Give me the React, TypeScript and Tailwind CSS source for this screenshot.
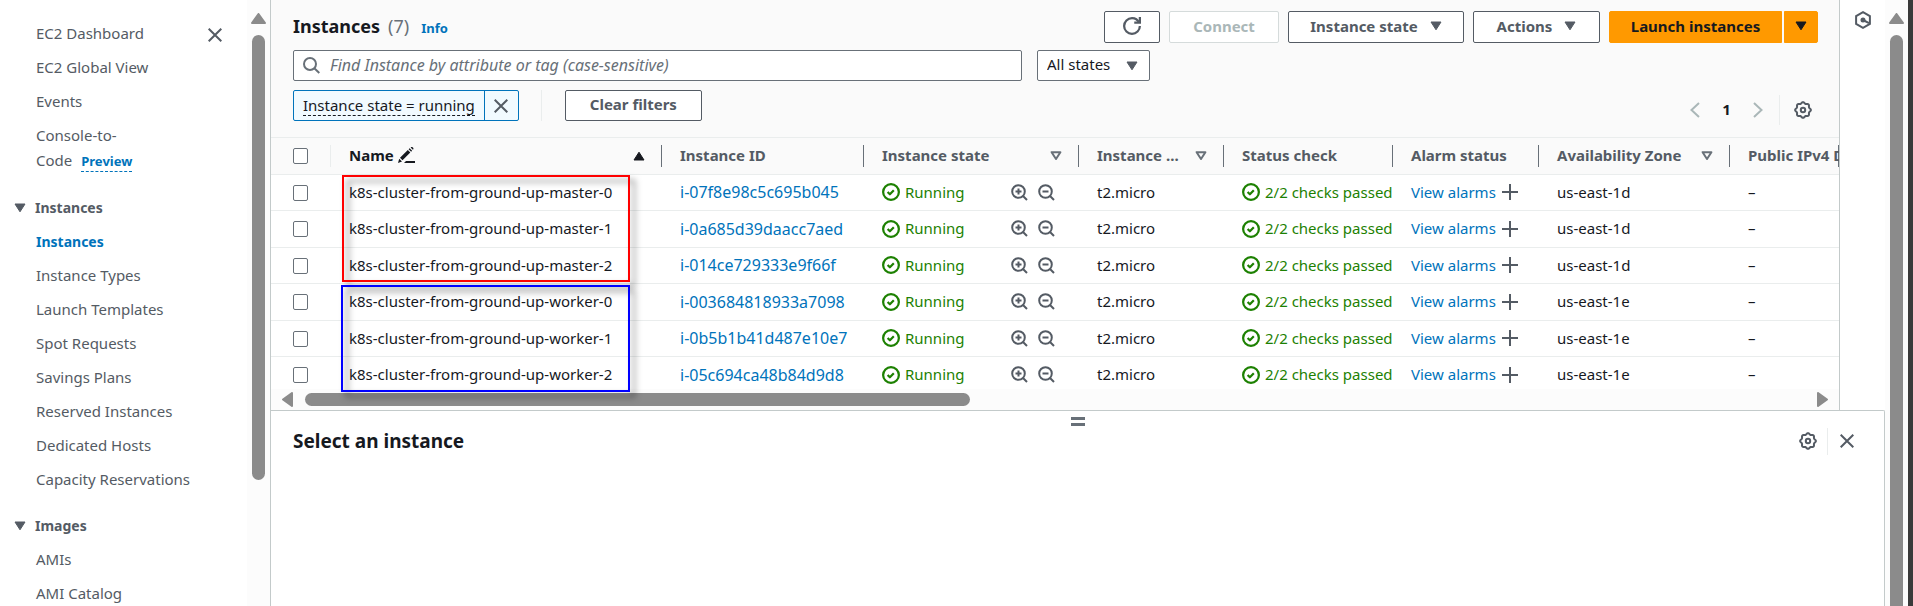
import React from 'react';

type IconProps = { className?: string };

const gearPath = (() => {
  const points: string[] = [];
  for (let i = 0; i < 96; i++) {
    const a = (i / 96) * Math.PI * 2;
    const r = 7.2 + 0.65 * Math.cos(8 * a);
    points.push(`${(9 + r * Math.cos(a)).toFixed(2)} ${(9 + r * Math.sin(a)).toFixed(2)}`);
  }
  return `M${points.join('L')}Z`;
})();

const GearIcon = () => (
  <svg width="18" height="18" viewBox="0 0 18 18" fill="none" stroke="#545b64" strokeWidth="2" aria-hidden="true">
    <path d={gearPath} />
    <circle cx="9" cy="9" r="2.2" />
  </svg>
);

const CloseIcon = () => (
  <svg width="14" height="14" viewBox="0 0 14 14" fill="none" stroke="#545b64" strokeWidth="2" aria-hidden="true">
    <path d="M.7.7l12.6 12.6M13.3.7L.7 13.3" />
  </svg>
);

const Caret = ({ className = '' }: IconProps) => (
  <svg width="12" height="10" viewBox="0 0 12 10" className={`shrink-0 ${className}`} fill="currentColor" stroke="currentColor" strokeLinejoin="round" aria-hidden="true">
    <path d="M1 1h10L6 8.8z" />
  </svg>
);

const CaretOutline = () => (
  <svg width="12" height="10" viewBox="0 0 12 10" className="shrink-0" fill="none" stroke="#687078" strokeWidth="2" strokeLinejoin="round" aria-hidden="true">
    <path d="M1.6 1.2h8.8L6 8z" />
  </svg>
);

const CheckCircle = () => (
  <svg width="18" height="18" viewBox="0 0 16 16" className="shrink-0" fill="none" stroke="#1d8102" strokeWidth="2" strokeLinejoin="round" aria-hidden="true">
    <circle cx="8" cy="8" r="7" />
    <path d="M5 8l2 2 3.5-3.5" />
  </svg>
);

const ZoomIcon = ({ plus }: { plus?: boolean }) => (
  <svg width="17" height="17" viewBox="0 0 17 17" fill="none" stroke="#545b64" strokeWidth="2" aria-hidden="true">
    <circle cx="7.5" cy="7.5" r="6.3" />
    <path d="M12 12l4 4M4.5 7.5h6" />
    {plus && <path d="M7.5 4.5v6" />}
  </svg>
);

const PlusIcon = () => (
  <svg width="16" height="16" viewBox="0 0 16 16" fill="none" stroke="#545b64" strokeWidth="2" aria-hidden="true">
    <path d="M8 0v16M0 8h16" />
  </svg>
);

const Chevron = ({ right }: { right?: boolean }) => (
  <svg width="10" height="16" viewBox="0 0 10 16" fill="none" stroke="#aab7b8" strokeWidth="2" aria-hidden="true">
    <path d={right ? 'M1 1l7.5 7L1 15' : 'M9 1L1.5 8 9 15'} />
  </svg>
);

const PencilIcon = () => (
  <svg width="17" height="16" viewBox="0 0 17 16" fill="#16191f" aria-hidden="true">
    <path d="M0 16l1.2-4.2 2.8 2.8zM2 10.800L9.800 3l2.500 2.500-7.800 7.800zM10.600 2.200l1-1 2.500 2.500-1 1zM12.600.5a1.600 1.600 0 0 1 2.300 2.300zM8 14h9v2H6z" />
  </svg>
);

const Triangle = ({ dir }: { dir: 'up' | 'left' | 'right' }) => {
  const box = dir === 'up' ? [15, 11] : [11, 15];
  const d = dir === 'up' ? 'M7.5 1L14 10H1z' : dir === 'left' ? 'M1 7.5L10 1v13z' : 'M10 7.5L1 1v13z';
  return (
    <svg width={box[0]} height={box[1]} viewBox={`0 0 ${box[0]} ${box[1]}`} className="shrink-0" fill="#8b8b8b" stroke="#8b8b8b" strokeWidth="2" strokeLinejoin="round" aria-hidden="true">
      <path d={d} />
    </svg>
  );
};

const NavLink = ({ children, active }: { children: React.ReactNode; active?: boolean }) => (
  <li>
    <a href="#" className={active ? 'text-sm leading-[25px] font-bold text-[#0073bb]' : 'leading-[25px]'}>
      {children}
    </a>
  </li>
);

const NavGroup = ({ title, items, active }: { title: string; items: string[]; active?: string }) => (
  <section className="mt-[21px]">
    <button className="flex items-center gap-[9px] pl-[14px] text-sm leading-[25px] font-bold">
      <Caret />
      {title}
    </button>
    <ul className="mt-[9px] flex flex-col gap-[9px] pl-9 leading-[25px]">
      {items.map((item) => (
        <NavLink key={item} active={item === active}>
          {item}
        </NavLink>
      ))}
    </ul>
  </section>
);

const Checkbox = ({ label }: { label: string }) => (
  <input type="checkbox" aria-label={label} className="block h-4 w-[15px] appearance-none rounded-[2px] border border-[#687078] bg-white" />
);

const buttonBase = 'flex h-8 items-center rounded-[2px] border pb-[2px] text-[15px] font-bold';

const columns: { label: string; icon?: 'asc' | 'outline' }[] = [
  { label: 'Name', icon: 'asc' },
  { label: 'Instance ID' },
  { label: 'Instance state', icon: 'outline' },
  { label: 'Instance ...', icon: 'outline' },
  { label: 'Status check' },
  { label: 'Alarm status' },
  { label: 'Availability Zone', icon: 'outline' },
  { label: 'Public IPv4 DNS' },
];

const rows = [
  { name: 'k8s-cluster-from-ground-up-master-0', id: 'i-07f8e98c5c695b045', zone: 'us-east-1d' },
  { name: 'k8s-cluster-from-ground-up-master-1', id: 'i-0a685d39daacc7aed', zone: 'us-east-1d' },
  { name: 'k8s-cluster-from-ground-up-master-2', id: 'i-014ce729333e9f66f', zone: 'us-east-1d' },
  { name: 'k8s-cluster-from-ground-up-worker-0', id: 'i-003684818933a7098', zone: 'us-east-1e' },
  { name: 'k8s-cluster-from-ground-up-worker-1', id: 'i-0b5b1b41d487e10e7', zone: 'us-east-1e' },
  { name: 'k8s-cluster-from-ground-up-worker-2', id: 'i-05c694ca48b84d9d8', zone: 'us-east-1e' },
];

const cell = 'overflow-hidden border-b border-[#eaeded] pb-px pl-[18px] whitespace-nowrap';

function Sidebar() {
  return (
    <aside className="flex w-[270px] shrink-0 overflow-hidden bg-white">
      <nav className="relative flex-1 pt-[21px] text-[15px] text-[#545b64]">
        <button aria-label="Close navigation" className="absolute top-7 right-[25px]">
          <CloseIcon />
        </button>
        <ul className="flex flex-col gap-[9px] pl-9 leading-[25px]">
          <NavLink>EC2 Dashboard</NavLink>
          <NavLink>EC2 Global View</NavLink>
          <NavLink>Events</NavLink>
          <li className="w-32">
            <a href="#">Console-to-Code</a>
            <a href="#" className="ml-[9px] border-b border-dashed border-[#0073bb] pb-px text-[13px] font-bold text-[#0073bb]">
              Preview
            </a>
          </li>
        </ul>
        <NavGroup
          title="Instances"
          active="Instances"
          items={['Instances', 'Instance Types', 'Launch Templates', 'Spot Requests', 'Savings Plans', 'Reserved Instances', 'Dedicated Hosts', 'Capacity Reservations']}
        />
        <NavGroup title="Images" items={['AMIs', 'AMI Catalog']} />
      </nav>
      <div className="flex w-[23px] flex-col items-center gap-[11px] bg-[#fcfcfc] pt-[13px]">
        <Triangle dir="up" />
        <div className="h-[445px] w-[13px] rounded-full bg-[#8b8b8b]" />
      </div>
    </aside>
  );
}

function Toolbar() {
  return (
    <header className="border-b border-[#eaeded] pt-[11px] pr-[21px] pb-[11px] pl-[22px]">
      <div className="flex items-center justify-between">
        <div className="flex items-baseline pb-[2px] text-lg">
          <h1 className="font-bold text-[#16191f]">Instances</h1>
          <span className="ml-2 text-[#687078]">(7)</span>
          <a href="#" className="ml-3 text-[13px] font-bold text-[#0073bb]">
            Info
          </a>
        </div>
        <div className="flex gap-[9px] text-[#545b64]">
          <button aria-label="Refresh" className={`${buttonBase} w-14 justify-center border-[#545b64] bg-white`}>
            <svg width="18" height="18" viewBox="0 0 16 16" fill="none" stroke="currentColor" strokeWidth="2" aria-hidden="true">
              <path d="M10 5h5V0" />
              <path d="M15 8a7 7 0 1 1-7-7 6.9 6.9 0 0 1 6.3 4" />
            </svg>
          </button>
          <button disabled className={`${buttonBase} w-[110px] justify-center border-[#d5dbdb] bg-white text-[#aab7b8]`}>
            Connect
          </button>
          <button className={`${buttonBase} w-44 justify-center gap-3 border-[#545b64] bg-white`}>
            Instance state <Caret />
          </button>
          <button className={`${buttonBase} w-[127px] justify-center gap-3 border-[#545b64] bg-white`}>
            Actions <Caret />
          </button>
          <div className="flex gap-[2px] text-[#16191f]">
            <button className={`${buttonBase} w-[173px] justify-center rounded-r-none border-[#ff9900] bg-[#ff9900]`}>Launch instances</button>
            <button aria-label="More launch options" className={`${buttonBase} w-[34px] justify-center rounded-l-none border-[#ff9900] bg-[#ff9900]`}>
              <Caret />
            </button>
          </div>
        </div>
      </div>

      <div className="mt-[7px] flex gap-[15px]">
        <label className="flex h-[31px] w-[729px] items-center gap-[10px] rounded-[2px] border border-[#687078] bg-white pl-[9px]">
          <svg width="17" height="17" viewBox="0 0 17 17" fill="none" stroke="#687078" strokeWidth="2" aria-hidden="true">
            <circle cx="7" cy="7" r="6" />
            <path d="M11.3 11.3l5 4.6" />
          </svg>
          <input
            type="text"
            aria-label="Find Instance"
            placeholder="Find Instance by attribute or tag (case-sensitive)"
            className="h-full flex-1 bg-transparent pb-px text-base outline-none placeholder:text-[#687078] placeholder:italic"
          />
        </label>
        <div className="relative flex items-center">
          <select aria-label="State filter" className="h-[31px] w-[113px] appearance-none rounded-[2px] border border-[#687078] bg-white pb-[2px] pl-[9px] text-[15px] text-[#16191f]">
            <option>All states</option>
          </select>
          <Caret className="pointer-events-none absolute right-3 text-[#545b64]" />
        </div>
      </div>

      <div className="mt-[9px] flex h-9 justify-between">
        <div className="flex h-[31px]">
          <div className="flex rounded-[2px] border border-[#0073bb] bg-[#f1faff]">
            <button className="flex items-center border-r border-[#0073bb] px-[9px] pb-px text-[15px] text-[#16191f]">
              <span className="border-b border-dashed border-[#16191f] leading-[20px]">Instance state = running</span>
            </button>
            <button aria-label="Remove filter" className="flex w-[33px] items-center justify-center">
              <CloseIcon />
            </button>
          </div>
          <div className="ml-[22px] w-px bg-[#eaeded]" />
          <button className="ml-[23px] w-[137px] rounded-[2px] border border-[#545b64] bg-white pb-[2px] text-[15px] font-bold text-[#545b64]">Clear filters</button>
        </div>
        <div className="flex h-[31px] items-center self-end pr-[6px] pb-px">
          <button aria-label="Previous page" disabled>
            <Chevron />
          </button>
          <button className="w-[53px] pb-[2px] text-center text-[15px] font-bold text-[#16191f]">1</button>
          <button aria-label="Next page" disabled>
            <Chevron right />
          </button>
          <div className="mr-[14px] ml-4 h-full w-px bg-[#eaeded]" />
          <button aria-label="Preferences">
            <GearIcon />
          </button>
        </div>
      </div>
    </header>
  );
}

function InstancesTable() {
  return (
    <div className="relative">
      <div className="max-h-[251px] overflow-hidden">
        <table className="w-full table-fixed border-separate border-spacing-0 text-[15px] text-[#16191f]">
          <colgroup>
            <col className="w-[60px]" />
            <col className="w-[331px]" />
            <col className="w-[202px]" />
            <col className="w-[215px]" />
            <col className="w-[145px]" />
            <col className="w-[169px]" />
            <col className="w-[146px]" />
            <col className="w-[191px]" />
            <col />
          </colgroup>
          <thead>
            <tr className="h-[37px]">
              <th className="border-b border-[#eaeded]">
                <div className="flex h-[22px] items-center border-r border-[#eaeded] pl-[22px]">
                  <Checkbox label="Select all instances" />
                </div>
              </th>
              {columns.map((c) => (
                <th key={c.label} className="overflow-hidden border-b border-[#eaeded] text-left font-bold whitespace-nowrap text-[#545b64]">
                  <div className="flex h-[22px] items-center justify-between border-r border-[#687078] pr-4 pl-[18px]">
                    {c.icon === 'asc' ? (
                      <span className="flex items-center gap-1 pb-[2px] text-[#16191f]">
                        {c.label}
                        <PencilIcon />
                      </span>
                    ) : (
                      <span className="pb-[2px]">{c.label}</span>
                    )}
                    {c.icon === 'asc' && <Caret className="rotate-180 text-[#16191f]" />}
                    {c.icon === 'outline' && <CaretOutline />}
                  </div>
                </th>
              ))}
            </tr>
          </thead>
          <tbody className="bg-white">
            {rows.map((r) => (
              <tr key={r.id} className="odd:h-[36px] even:h-[37px]">
                <td className="border-b border-[#eaeded] pl-[22px]">
                  <Checkbox label={`Select ${r.name}`} />
                </td>
                <td className={cell}>{r.name}</td>
                <td className={cell}>
                  <a href="#" className="block text-base leading-[22px] text-[#0073bb]">
                    {r.id}
                  </a>
                </td>
                <td className={cell}>
                  <div className="flex items-center justify-between pr-6">
                    <span className="flex items-center gap-[5px] text-[#1d8102]">
                      <CheckCircle />
                      Running
                    </span>
                    <span className="flex gap-[10px]">
                      <button aria-label="Filter for this state">
                        <ZoomIcon plus />
                      </button>
                      <button aria-label="Filter out this state">
                        <ZoomIcon />
                      </button>
                    </span>
                  </div>
                </td>
                <td className={cell}>t2.micro</td>
                <td className={cell}>
                  <span className="flex items-center gap-[5px] text-[#1d8102]">
                    <CheckCircle />
                    2/2 checks passed
                  </span>
                </td>
                <td className={cell}>
                  <span className="flex items-center gap-[6px]">
                    <a href="#" className="text-[#0073bb]">
                      View alarms
                    </a>
                    <button aria-label="Create alarm">
                      <PlusIcon />
                    </button>
                  </span>
                </td>
                <td className={cell}>{r.zone}</td>
                <td className={cell}>–</td>
              </tr>
            ))}
          </tbody>
        </table>
      </div>
      <div className="flex h-[21px] items-center gap-3 bg-[#fcfcfc] px-[11px]">
        <Triangle dir="left" />
        <div className="flex-1">
          <div className="h-[13px] w-[44.3%] rounded-full bg-[#8b8b8b]" />
        </div>
        <Triangle dir="right" />
      </div>
      <div className="pointer-events-none absolute top-[37px] left-[71px] h-[107px] w-72 border-2 border-[#ff0000] drop-shadow-[5px_5px_3px_rgba(0,0,0,0.5)]" />
      <div className="pointer-events-none absolute top-[147px] left-[70px] h-[107px] w-[289px] border-2 border-[#0000ff] drop-shadow-[5px_5px_3px_rgba(0,0,0,0.5)]" />
    </div>
  );
}

export default function App() {
  return (
    <div className="flex h-screen overflow-hidden bg-white font-['Noto_Sans',sans-serif]">
      <Sidebar />
      <div className="flex min-w-0 flex-1 flex-col border-l border-[#c3caca]">
        <div className="flex">
          <main className="min-w-0 flex-1 bg-[#fafafa]">
            <Toolbar />
            <InstancesTable />
          </main>
          <div className="w-[46px] shrink-0 border-l border-[#c3caca] bg-white pt-[11px] pl-[15px]">
            <button aria-label="Open tools" className="block">
              <svg width="16" height="18" viewBox="0 0 16 18" fill="none" stroke="#545b64" strokeWidth="2" aria-hidden="true">
                <path d="M8 1.2l6.9 3.9v7.8L8 16.8l-6.9-3.9V5.1z" />
                <path d="M8 9l6 3.2" />
                <circle cx="8" cy="9" r="1.5" fill="#545b64" />
              </svg>
            </button>
          </div>
        </div>
        <section className="flex flex-1 flex-col rounded-tr-[2px] border-t border-r border-[#c3caca] bg-white">
          <div className="flex justify-center pt-[6px]">
            <button aria-label="Resize panel" className="flex h-[9px] w-[14px] flex-col justify-between">
              <span className="h-[3px] w-full bg-[#687078]" />
              <span className="h-[3px] w-full bg-[#687078]" />
            </button>
          </div>
          <div className="flex items-center justify-between pt-px pr-[30px] pl-[22px]">
            <h2 className="text-[19px] font-bold text-[#16191f]">Select an instance</h2>
            <div className="flex items-center">
              <button aria-label="Panel preferences">
                <GearIcon />
              </button>
              <div className="mr-3 ml-[10px] h-[27px] w-px bg-[#eaeded]" />
              <button aria-label="Close panel">
                <CloseIcon />
              </button>
            </div>
          </div>
        </section>
      </div>
      <div className="flex w-[23px] shrink-0 flex-col items-center gap-[11px] bg-[#fcfcfc] pt-[13px]">
        <Triangle dir="up" />
        <div className="w-[13px] flex-1 rounded-t-full bg-[#8b8b8b]" />
      </div>
      <div className="w-[5px] shrink-0 bg-[#3a3a3a]" />
    </div>
  );
}
